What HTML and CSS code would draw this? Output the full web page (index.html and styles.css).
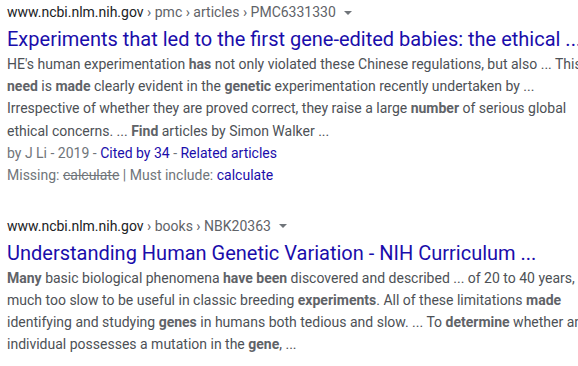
FILE: index.html
```html
<!DOCTYPE html>
<html>
<head>
<meta charset="utf-8">
<link rel="stylesheet" href="styles.css">
</head>
<body>
<div class="results">
  <div class="result">
    <div class="cite"><span class="domain">www.ncbi.nlm.nih.gov</span><span class="crumbs"> › pmc › articles › PMC6331330</span><span class="arrow"></span></div>
    <div class="title">Experiments that led to the first gene-edited babies: the ethical ...</div>
    <div class="snippet">HE's human experimentation <b>has</b> not only violated these Chinese regulations, but also ... This <b>need</b> is <b>made</b> clearly evident in the <b>genetic</b> experimentation recently undertaken by ...<br>Irrespective of whether they are proved correct, they raise a large <b>number</b> of serious global ethical concerns. ... <b>Find</b> articles by Simon Walker ...</div>
    <div class="meta">by J Li - 2019 - <span class="link">Cited by 34</span> - <span class="link">Related articles</span></div>
    <div class="meta">Missing: <s>calculate</s> | Must include: <span class="link">calculate</span></div>
  </div>
  <div class="result">
    <div class="cite"><span class="domain">www.ncbi.nlm.nih.gov</span><span class="crumbs"> › books › NBK20363</span><span class="arrow"></span></div>
    <div class="title">Understanding Human Genetic Variation - NIH Curriculum ...</div>
    <div class="snippet"><b>Many</b> basic biological phenomena <b>have been</b> discovered and described ... of 20 to 40 years, much too slow to be useful in classic breeding <b>experiments</b>. All of these limitations <b>made</b> identifying and studying <b>genes</b> in humans both tedious and slow. ... To <b>determine</b> whether an individual possesses a mutation in the <b>gene</b>, ...</div>
  </div>
</div>
</body>
</html>
```
FILE: styles.css
```css
html, body {
  margin: 0;
  padding: 0;
  background: #fff;
  overflow: hidden;
}
body {
  font-family: Roboto, "Liberation Sans", sans-serif;
  color: #4d5156;
}
.results {
  width: 580px;
  padding: 2px 0 0 7px;
  display: flex;
  flex-direction: column;
  gap: 30px;
}
.result {
  display: flex;
  flex-direction: column;
}
.cite {
  font-size: 14px;
  line-height: 20px;
  white-space: nowrap;
  display: flex;
  align-items: center;
}
.domain { color: #202124; }
.crumbs { color: #5f6368; white-space: pre; }
.arrow {
  margin-left: 8px;
  width: 0;
  height: 0;
  border-left: 4px solid transparent;
  border-right: 4px solid transparent;
  border-top: 4px solid #70757a;
  margin-top: 1px;
}
.title {
  font-size: 20px;
  line-height: 24px;
  margin-top: 5px;
  color: #1a0dab;
  white-space: nowrap;
}
.snippet {
  font-size: 14px;
  line-height: 22.2px;
  margin-top: 2px;
}
.snippet b { color: #5f6368; font-weight: 700; }
.meta {
  font-size: 14px;
  line-height: 22px;
  color: #70757a;
}
.link { color: #1a0dab; }
s { color: #70757a; }
```
